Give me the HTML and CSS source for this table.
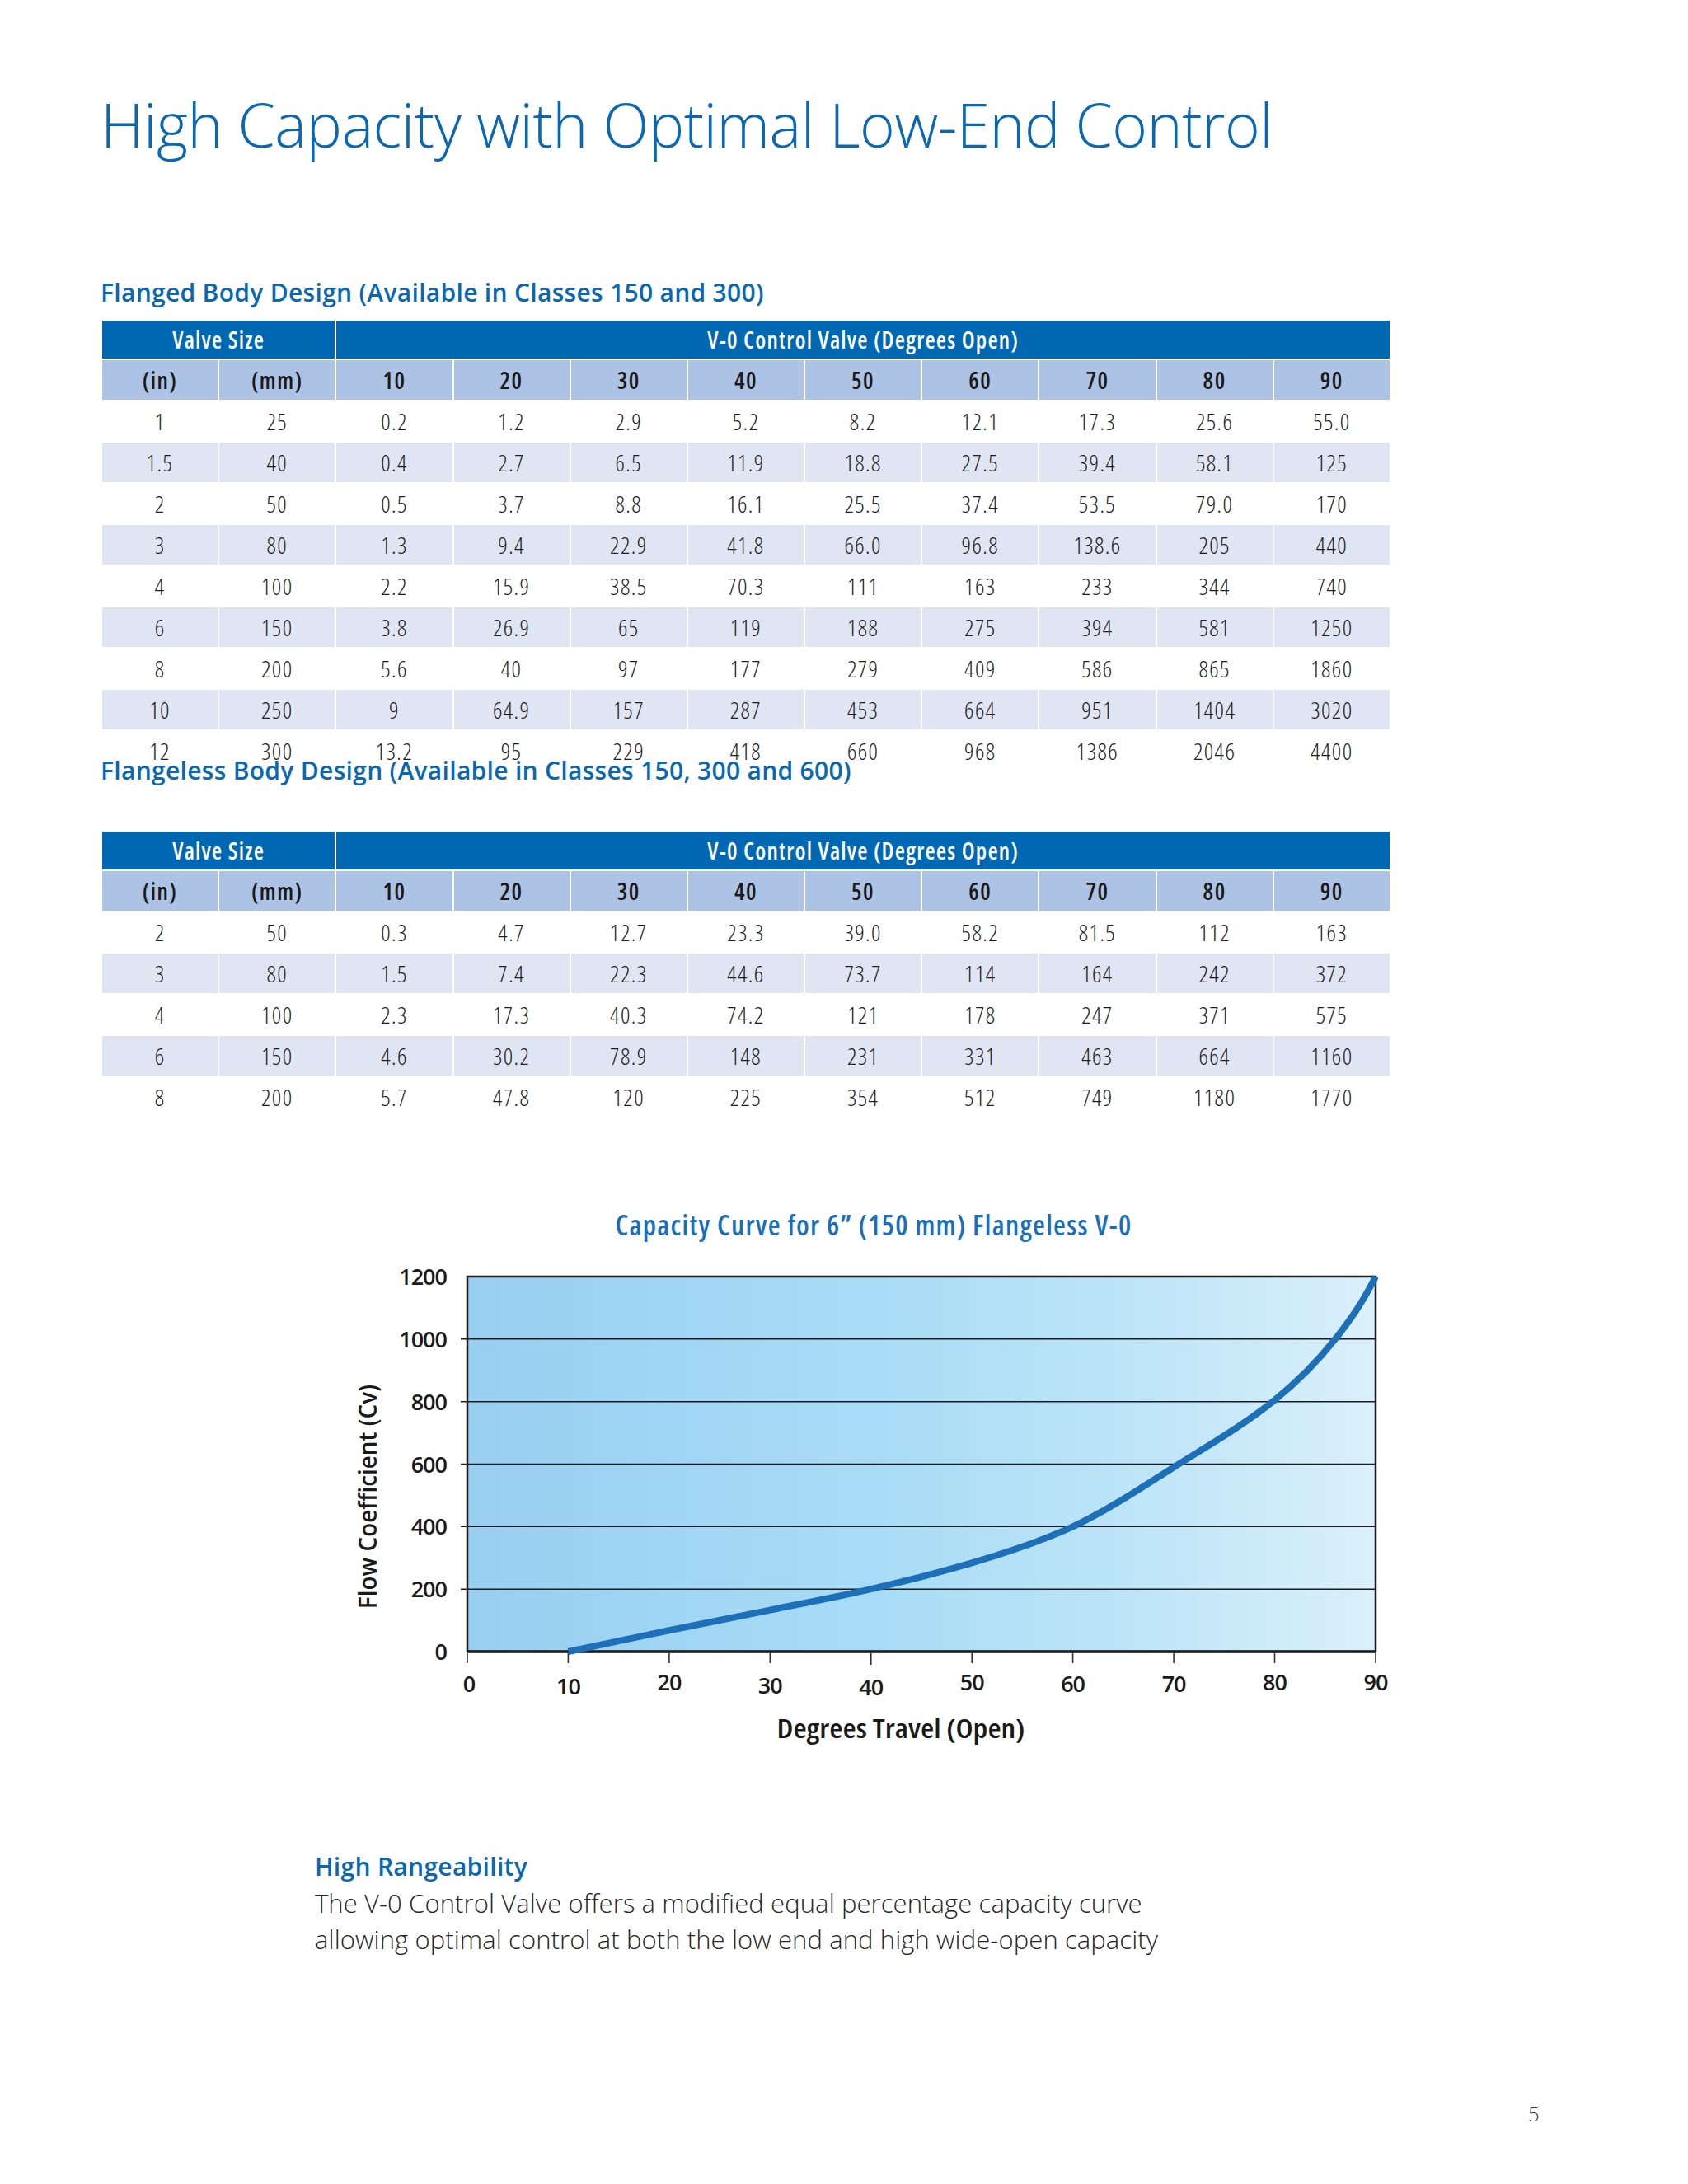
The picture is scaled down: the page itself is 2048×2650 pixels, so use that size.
FILE: index.html
```html
<!DOCTYPE html>
<html lang="en">
<head>
<meta charset="utf-8">
<title>High Capacity with Optimal Low-End Control</title>
<link rel="stylesheet" href="styles.css">
</head>
<body>
<div class="page">
  <h1 class="title">High Capacity with Optimal Low-End Control</h1>

  <h2 class="sec sec-first">Flanged Body Design (Available in Classes 150 and 300)</h2>
  <table class="cv">
    <tr class="hd1"><td colspan="2">Valve Size</td><td colspan="9">V-0 Control Valve (Degrees Open)</td></tr>
    <tr class="hd2"><td>(in)</td><td>(mm)</td><td>10</td><td>20</td><td>30</td><td>40</td><td>50</td><td>60</td><td>70</td><td>80</td><td>90</td></tr>
    <tr><td>1</td><td>25</td><td>0.2</td><td>1.2</td><td>2.9</td><td>5.2</td><td>8.2</td><td>12.1</td><td>17.3</td><td>25.6</td><td>55.0</td></tr>
    <tr class="alt"><td>1.5</td><td>40</td><td>0.4</td><td>2.7</td><td>6.5</td><td>11.9</td><td>18.8</td><td>27.5</td><td>39.4</td><td>58.1</td><td>125</td></tr>
    <tr><td>2</td><td>50</td><td>0.5</td><td>3.7</td><td>8.8</td><td>16.1</td><td>25.5</td><td>37.4</td><td>53.5</td><td>79.0</td><td>170</td></tr>
    <tr class="alt"><td>3</td><td>80</td><td>1.3</td><td>9.4</td><td>22.9</td><td>41.8</td><td>66.0</td><td>96.8</td><td>138.6</td><td>205</td><td>440</td></tr>
    <tr><td>4</td><td>100</td><td>2.2</td><td>15.9</td><td>38.5</td><td>70.3</td><td>111</td><td>163</td><td>233</td><td>344</td><td>740</td></tr>
    <tr class="alt"><td>6</td><td>150</td><td>3.8</td><td>26.9</td><td>65</td><td>119</td><td>188</td><td>275</td><td>394</td><td>581</td><td>1250</td></tr>
    <tr><td>8</td><td>200</td><td>5.6</td><td>40</td><td>97</td><td>177</td><td>279</td><td>409</td><td>586</td><td>865</td><td>1860</td></tr>
    <tr class="alt"><td>10</td><td>250</td><td>9</td><td>64.9</td><td>157</td><td>287</td><td>453</td><td>664</td><td>951</td><td>1404</td><td>3020</td></tr>
    <tr><td>12</td><td>300</td><td>13.2</td><td>95</td><td>229</td><td>418</td><td>660</td><td>968</td><td>1386</td><td>2046</td><td>4400</td></tr>
  </table>

  <h2 class="sec sec-second">Flangeless Body Design (Available in Classes 150, 300 and 600)</h2>
  <table class="cv">
    <tr class="hd1"><td colspan="2">Valve Size</td><td colspan="9">V-0 Control Valve (Degrees Open)</td></tr>
    <tr class="hd2"><td>(in)</td><td>(mm)</td><td>10</td><td>20</td><td>30</td><td>40</td><td>50</td><td>60</td><td>70</td><td>80</td><td>90</td></tr>
    <tr><td>2</td><td>50</td><td>0.3</td><td>4.7</td><td>12.7</td><td>23.3</td><td>39.0</td><td>58.2</td><td>81.5</td><td>112</td><td>163</td></tr>
    <tr class="alt"><td>3</td><td>80</td><td>1.5</td><td>7.4</td><td>22.3</td><td>44.6</td><td>73.7</td><td>114</td><td>164</td><td>242</td><td>372</td></tr>
    <tr><td>4</td><td>100</td><td>2.3</td><td>17.3</td><td>40.3</td><td>74.2</td><td>121</td><td>178</td><td>247</td><td>371</td><td>575</td></tr>
    <tr class="alt"><td>6</td><td>150</td><td>4.6</td><td>30.2</td><td>78.9</td><td>148</td><td>231</td><td>331</td><td>463</td><td>664</td><td>1160</td></tr>
    <tr><td>8</td><td>200</td><td>5.7</td><td>47.8</td><td>120</td><td>225</td><td>354</td><td>512</td><td>749</td><td>1180</td><td>1770</td></tr>
  </table>

  <section class="chart">
    <h3 class="chart-title">Capacity Curve for 6&#8221; (150 mm) Flangeless V-0</h3>
    <svg class="chart-svg" width="1320" height="620" viewBox="0 0 1320 620">
      <defs>
        <linearGradient id="plotbg" x1="0" y1="0" x2="1" y2="0">
          <stop offset="0" stop-color="#99cef1"/>
          <stop offset="0.45" stop-color="#a8dcf6"/>
          <stop offset="0.75" stop-color="#bfe5f8"/>
          <stop offset="1" stop-color="#dbf0fb"/>
        </linearGradient>
      </defs>
      <rect x="167" y="32" width="1102" height="455" fill="url(#plotbg)"/>
      <g class="grid">
        <line x1="159" y1="107.8" x2="1269" y2="107.8"/>
        <line x1="159" y1="183.7" x2="1269" y2="183.7"/>
        <line x1="159" y1="259.5" x2="1269" y2="259.5"/>
        <line x1="159" y1="335.3" x2="1269" y2="335.3"/>
        <line x1="159" y1="411.2" x2="1269" y2="411.2"/>
      </g>
      <g class="ticks">
        <line x1="167" y1="489" x2="167" y2="501"/>
        <line x1="289.4" y1="489" x2="289.4" y2="501"/>
        <line x1="411.9" y1="489" x2="411.9" y2="501"/>
        <line x1="534.3" y1="489" x2="534.3" y2="501"/>
        <line x1="656.8" y1="489" x2="656.8" y2="503"/>
        <line x1="779.2" y1="489" x2="779.2" y2="501"/>
        <line x1="901.6" y1="489" x2="901.6" y2="501"/>
        <line x1="1024.1" y1="489" x2="1024.1" y2="501"/>
        <line x1="1146.5" y1="489" x2="1146.5" y2="501"/>
        <line x1="1269" y1="489" x2="1269" y2="501"/>
      </g>
      <path class="frame" d="M167 32 H1269 V487 H167 Z"/>
      <line class="baseaxis" x1="167" y1="487" x2="1269" y2="487"/>
      <path class="curve" d="M289.44 487 C330.25 478.78 371.07 469.56 411.88 461.22 C452.69 452.87 493.51 444.91 534.32 436.57 C575.13 428.23 615.95 420.65 656.76 411.17 C697.57 401.69 738.39 391.33 779.2 379.32 C820.01 367.31 860.83 354.29 901.64 335.33 C942.45 316.37 983.27 289.2 1024.08 263.29 C1064.89 237.38 1105.71 214.63 1146.52 181.77 C1171.01 162.05 1195.5 138.92 1219.98 107.83 C1228.15 97.47 1236.31 86.6 1244.47 74.46 C1252.63 62.33 1260.8 48.17 1269 32"/>
      <g class="ylab">
        <text x="142" y="42">1200</text>
        <text x="142" y="118">1000</text>
        <text x="142" y="194">800</text>
        <text x="142" y="270">600</text>
        <text x="142" y="345">400</text>
        <text x="142" y="421">200</text>
        <text x="142" y="497">0</text>
      </g>
      <g class="xlab">
        <text x="169" y="536">0</text>
        <text x="289.4" y="539">10</text>
        <text x="411.9" y="534">20</text>
        <text x="534.3" y="538">30</text>
        <text x="656.8" y="540">40</text>
        <text x="779.2" y="534">50</text>
        <text x="901.6" y="536">60</text>
        <text x="1024.1" y="536">70</text>
        <text x="1146.5" y="534">80</text>
        <text x="1269" y="534">90</text>
      </g>
      <text class="xtitle" x="693" y="592" textLength="301" lengthAdjust="spacingAndGlyphs">Degrees Travel (Open)</text>
      <text class="ytitle" transform="translate(57,299) rotate(-90)" textLength="272" lengthAdjust="spacingAndGlyphs">Flow Coefficient (Cv)</text>
    </svg>
  </section>

  <section class="note">
    <h3 class="note-title">High Rangeability</h3>
    <p class="note-text">The V-0 Control Valve offers a modified equal percentage capacity curve<br>allowing optimal control at both the low end and high wide-open capacity</p>
  </section>

  <footer class="folio">5</footer>
</div>
</body>
</html>
```

FILE: styles.css
```css
html, body {
  margin: 0;
  padding: 0;
  background: #ffffff;
}

.page {
  width: 2048px;
  min-height: 2650px;
  box-sizing: border-box;
  padding: 111px 0 0 122px;
  font-family: "Open Sans", "Liberation Sans", sans-serif;
  color: #1a1a1a;
}

.title {
  margin: 0;
  font-size: 73px;
  line-height: 80px;
  font-weight: 300;
  letter-spacing: -0.5px;
  color: #0a67b2;
}

.sec {
  margin: 0;
  font-size: 30px;
  line-height: 36px;
  font-weight: 600;
  color: #0a67b2;
  letter-spacing: 0.3px;
}

.sec-first {
  margin-top: 146px;
  margin-bottom: 14px;
}

.sec-second {
  margin-top: -20px;
  margin-bottom: 54px;
  position: relative;
}

.cv {
  width: 1566px;
  table-layout: fixed;
  border-collapse: collapse;
  font-family: "Open Sans", sans-serif;
  font-stretch: condensed;
  font-size: 28px;
  font-weight: 300;
  letter-spacing: 1.4px;
  color: #1e1e1e;
}

.cv td {
  border: 2px solid #ffffff;
  padding: 0;
  height: 50px;
  text-align: center;
  vertical-align: middle;
  box-sizing: border-box;
}

.cv .hd1 td {
  height: 48px;
  background: #0068b3;
  color: #ffffff;
  font-size: 28px;
  font-weight: 600;
  letter-spacing: 1.2px;
}

.cv .hd2 td {
  background: #adc3e6;
  color: #1a1a1a;
  font-weight: 600;
  letter-spacing: 1.5px;
}

.cv .alt td {
  background: #e0e5f3;
}

.chart {
  margin: 110px 0 0 278px;
  width: 1320px;
}

.chart-title {
  margin: 0 0 12px 0;
  text-align: center;
  font-family: "Open Sans", sans-serif;
  font-stretch: condensed;
  font-size: 34px;
  line-height: 38px;
  font-weight: 600;
  letter-spacing: 1.3px;
  color: #1a70b8;
}

.chart-svg {
  display: block;
}

.grid line {
  stroke: #1b1b1b;
  stroke-width: 1.6;
}

.ticks line {
  stroke: #333333;
  stroke-width: 1.6;
}

.frame {
  fill: none;
  stroke: #1b1b1b;
  stroke-width: 2.5;
}

.baseaxis {
  stroke: #1b1b1b;
  stroke-width: 3.5;
}

.curve {
  fill: none;
  stroke: #1d6fb8;
  stroke-width: 8;
  stroke-linecap: butt;
  stroke-linejoin: round;
}

.ylab text {
  font-family: "Open Sans", sans-serif;
  font-size: 27px;
  font-weight: 600;
  fill: #1a1a1a;
  text-anchor: end;
  letter-spacing: -1px;
}

.xlab text {
  font-family: "Open Sans", sans-serif;
  font-size: 27px;
  font-weight: 600;
  fill: #1a1a1a;
  text-anchor: middle;
  letter-spacing: -1px;
}

.xtitle {
  font-family: "Open Sans", sans-serif;
  font-stretch: condensed;
  font-size: 33px;
  font-weight: 600;
  fill: #1a1a1a;
  text-anchor: middle;
}

.ytitle {
  font-family: "Open Sans", sans-serif;
  font-size: 31px;
  font-weight: 600;
  fill: #1a1a1a;
  text-anchor: middle;
}

.note {
  margin: 106px 0 0 260px;
}

.note-title {
  margin: 0;
  font-size: 30px;
  line-height: 44px;
  font-weight: 600;
  letter-spacing: 0.3px;
  color: #0a67b2;
}

.note-text {
  margin: 0;
  font-size: 31px;
  line-height: 44px;
  font-weight: 300;
  letter-spacing: 0.1px;
  color: #262626;
}

.folio {
  margin: 175px 0 0 1732px;
  font-size: 24px;
  line-height: 30px;
  font-weight: 300;
  color: #333333;
}
```
